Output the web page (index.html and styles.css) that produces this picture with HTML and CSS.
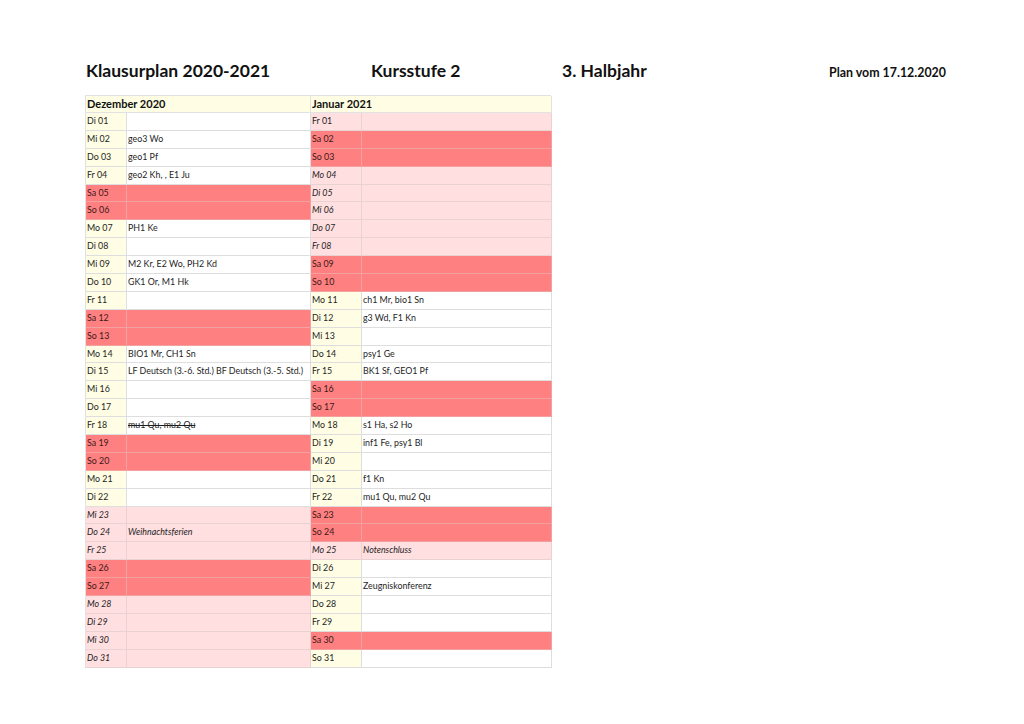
FILE: index.html
```html
<!DOCTYPE html>
<html lang="de">
<head>
<meta charset="utf-8">
<title>Klausurplan 2020-2021</title>
<link rel="stylesheet" href="styles.css">
</head>
<body>
<div class="page">
  <div class="titlebar">
    <div class="t t1">Klausurplan 2020-2021</div>
    <div class="t t2">Kursstufe 2</div>
    <div class="t t3">3. Halbjahr</div>
    <div class="t small">Plan vom 17.12.2020</div>
  </div>
  <div class="plan">
    <div class="month dec">
      <div class="mhead">Dezember 2020</div>
      <div class="row wk"><div class="d">Di 01</div><div class="c"></div></div>
      <div class="row wk"><div class="d">Mi 02</div><div class="c">geo3 Wo</div></div>
      <div class="row wk"><div class="d">Do 03</div><div class="c">geo1 Pf</div></div>
      <div class="row wk"><div class="d">Fr 04</div><div class="c">geo2 Kh, , E1 Ju</div></div>
      <div class="row we"><div class="d">Sa 05</div><div class="c"></div></div>
      <div class="row we"><div class="d">So 06</div><div class="c"></div></div>
      <div class="row wk"><div class="d">Mo 07</div><div class="c">PH1 Ke</div></div>
      <div class="row wk"><div class="d">Di 08</div><div class="c"></div></div>
      <div class="row wk"><div class="d">Mi 09</div><div class="c">M2 Kr, E2 Wo, PH2 Kd</div></div>
      <div class="row wk"><div class="d">Do 10</div><div class="c">GK1 Or, M1 Hk</div></div>
      <div class="row wk"><div class="d">Fr 11</div><div class="c"></div></div>
      <div class="row we"><div class="d">Sa 12</div><div class="c"></div></div>
      <div class="row we"><div class="d">So 13</div><div class="c"></div></div>
      <div class="row wk"><div class="d">Mo 14</div><div class="c">BIO1 Mr, CH1 Sn</div></div>
      <div class="row wk"><div class="d">Di 15</div><div class="c">LF Deutsch (3.-6. Std.) BF Deutsch (3.-5. Std.)</div></div>
      <div class="row wk"><div class="d">Mi 16</div><div class="c"></div></div>
      <div class="row wk"><div class="d">Do 17</div><div class="c"></div></div>
      <div class="row wk"><div class="d">Fr 18</div><div class="c"><s>mu1 Qu, mu2 Qu</s></div></div>
      <div class="row we"><div class="d">Sa 19</div><div class="c"></div></div>
      <div class="row we"><div class="d">So 20</div><div class="c"></div></div>
      <div class="row wk"><div class="d">Mo 21</div><div class="c"></div></div>
      <div class="row wk"><div class="d">Di 22</div><div class="c"></div></div>
      <div class="row hol it"><div class="d">Mi 23</div><div class="c"></div></div>
      <div class="row hol it"><div class="d">Do 24</div><div class="c">Weihnachtsferien</div></div>
      <div class="row hol it"><div class="d">Fr 25</div><div class="c"></div></div>
      <div class="row we"><div class="d">Sa 26</div><div class="c"></div></div>
      <div class="row we"><div class="d">So 27</div><div class="c"></div></div>
      <div class="row hol it"><div class="d">Mo 28</div><div class="c"></div></div>
      <div class="row hol it"><div class="d">Di 29</div><div class="c"></div></div>
      <div class="row hol it"><div class="d">Mi 30</div><div class="c"></div></div>
      <div class="row hol it"><div class="d">Do 31</div><div class="c"></div></div>
    </div>
    <div class="month jan">
      <div class="mhead">Januar 2021</div>
      <div class="row hol"><div class="d">Fr 01</div><div class="c"></div></div>
      <div class="row we"><div class="d">Sa 02</div><div class="c"></div></div>
      <div class="row we"><div class="d">So 03</div><div class="c"></div></div>
      <div class="row hol it"><div class="d">Mo 04</div><div class="c"></div></div>
      <div class="row hol it"><div class="d">Di 05</div><div class="c"></div></div>
      <div class="row hol it"><div class="d">Mi 06</div><div class="c"></div></div>
      <div class="row hol it"><div class="d">Do 07</div><div class="c"></div></div>
      <div class="row hol it"><div class="d">Fr 08</div><div class="c"></div></div>
      <div class="row we"><div class="d">Sa 09</div><div class="c"></div></div>
      <div class="row we"><div class="d">So 10</div><div class="c"></div></div>
      <div class="row wk"><div class="d">Mo 11</div><div class="c">ch1 Mr, bio1 Sn</div></div>
      <div class="row wk"><div class="d">Di 12</div><div class="c">g3 Wd, F1 Kn</div></div>
      <div class="row wk"><div class="d">Mi 13</div><div class="c"></div></div>
      <div class="row wk"><div class="d">Do 14</div><div class="c">psy1 Ge</div></div>
      <div class="row wk"><div class="d">Fr 15</div><div class="c">BK1 Sf, GEO1 Pf</div></div>
      <div class="row we"><div class="d">Sa 16</div><div class="c"></div></div>
      <div class="row we"><div class="d">So 17</div><div class="c"></div></div>
      <div class="row wk"><div class="d">Mo 18</div><div class="c">s1 Ha, s2 Ho</div></div>
      <div class="row wk"><div class="d">Di 19</div><div class="c">inf1 Fe, psy1 Bl</div></div>
      <div class="row wk"><div class="d">Mi 20</div><div class="c"></div></div>
      <div class="row wk"><div class="d">Do 21</div><div class="c">f1 Kn</div></div>
      <div class="row wk"><div class="d">Fr 22</div><div class="c">mu1 Qu, mu2 Qu</div></div>
      <div class="row we"><div class="d">Sa 23</div><div class="c"></div></div>
      <div class="row we"><div class="d">So 24</div><div class="c"></div></div>
      <div class="row hol it"><div class="d">Mo 25</div><div class="c">Notenschluss</div></div>
      <div class="row wk"><div class="d">Di 26</div><div class="c"></div></div>
      <div class="row wk"><div class="d">Mi 27</div><div class="c">Zeugniskonferenz</div></div>
      <div class="row wk"><div class="d">Do 28</div><div class="c"></div></div>
      <div class="row wk"><div class="d">Fr 29</div><div class="c"></div></div>
      <div class="row we"><div class="d">Sa 30</div><div class="c"></div></div>
      <div class="row wk"><div class="d">So 31</div><div class="c"></div></div>
    </div>
  </div>
</div>
</body>
</html>
```

FILE: styles.css
```css
* { box-sizing: border-box; }
html, body { margin: 0; padding: 0; background: #fff; }
body { font-family: Lato, "Open Sans", sans-serif; color: #1e1e1e; }
.page { padding-top: 60px; }
.titlebar {
  display: flex;
  align-items: baseline;
  padding-left: 86px;
  height: 35px;
}
.t { font-weight: 700; font-size: 17.5px; white-space: nowrap; color: #111; }
.t1 { width: 285px; }
.t2 { width: 191px; }
.t3 { width: 267px; }
.small { font-size: 12.4px; }
.plan {
  display: flex;
  margin-left: 85px;
  width: 466px;
  border-top: 1px solid #e2e2e2;
  border-left: 1px solid #e2e2e2;
}
.month { display: flex; flex-direction: column; }
.dec { width: 225px; }
.jan { width: 241px; }
.mhead {
  height: 17px;
  background: #fffde3;
  font-weight: 700;
  font-size: 11px;
  line-height: 16px;
  padding-left: 1px;
  border-right: 1px solid #e2e2e2;
  border-bottom: 1px solid #e2e2e2;
  color: #111;
}
.row { display: flex; height: 17.9px; font-size: 8.85px; line-height: 16.9px; }
.row .d, .row .c {
  border-right: 1px solid #dedede;
  border-bottom: 1px solid #dedede;
  white-space: nowrap;
  overflow: hidden;
}
.dec .d { width: 41px; padding-left: 1px; }
.dec .c { width: 184px; padding-left: 1px; }
.jan .d { width: 51px; padding-left: 1px; }
.jan .c { width: 190px; padding-left: 1px; }
.wk .d { background: #fffde3; }
.wk .c { background: #fff; }
.we .d, .we .c { background: #ff8080; border-color: #f2a0a0; color: #3a1a1a; }
.hol .d, .hol .c { background: #ffdfe0; border-color: #e9d2d2; }
.it { font-style: italic; }
s { text-decoration-thickness: 1px; }
```
